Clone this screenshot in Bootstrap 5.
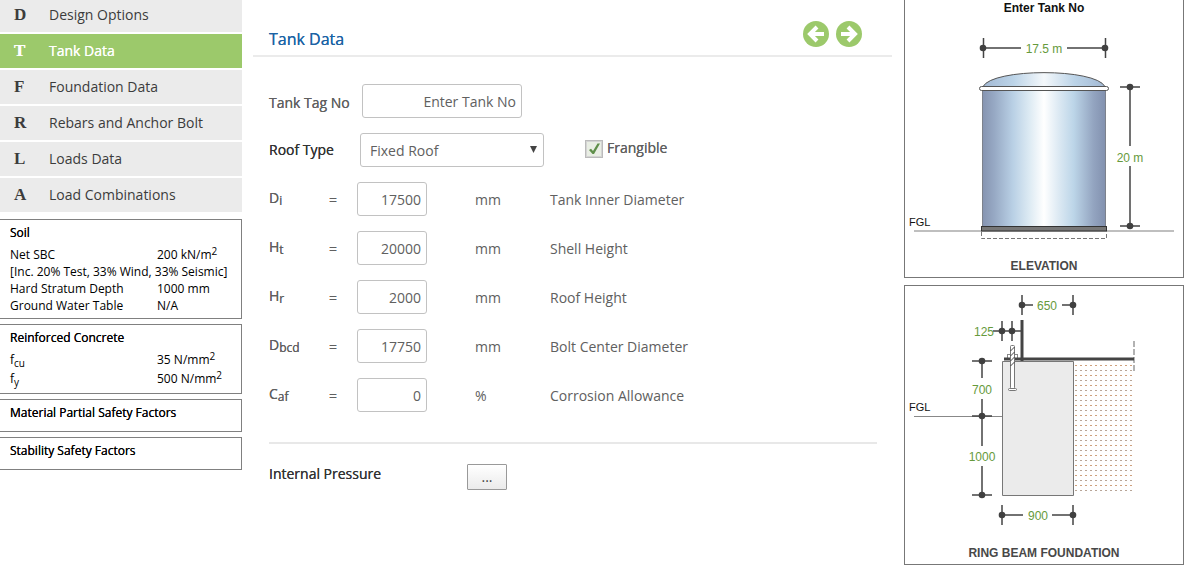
<!DOCTYPE html>
<html lang="en">
<head>
<meta charset="utf-8">
<meta name="viewport" content="width=device-width, initial-scale=1">
<title>Tank Data</title>
<link href="https://cdn.jsdelivr.net/npm/bootstrap@5.3.0/dist/css/bootstrap.min.css" rel="stylesheet">
<script src="https://cdn.jsdelivr.net/npm/bootstrap@5.3.0/dist/js/bootstrap.bundle.min.js"></script>
<style>
  body { font: 14px/20px "Open Sans", sans-serif; color: #606060; background: #fff; }
  .strong-ish { text-shadow: 0 0 0 currentColor; }
  .side { width: 242px; }
  .views { width: 280px; gap: 7px; margin-right: 2px; }
  .work { padding: 24px 12px 0 11px; min-width: 0; }

  /* step menu */
  .steps { gap: 2px; margin-top: -2px; padding-bottom: 7px; }
  .steps a { display: flex; align-items: center; height: 34px; padding: 0 14px; background: #ebebeb; color: #3c3c3c; text-decoration: none; }
  .steps a.active { background: #9cc96b; color: #fff; }
  .steps b { width: 35px; font: bold 17px/20px "Liberation Serif", serif; }

  /* summary boxes */
  .facts { gap: 5px; font-size: 12px; line-height: 17px; color: #000; }
  .facts section { border: 1px solid #808080; border-left: 0; padding: 4px 10px; }
  .facts h2 { font-size: 12px; line-height: 17px; margin: 0 0 5px; }
  .facts .bare h2 { margin-bottom: 6px; }
  .facts table { width: 100%; table-layout: fixed; }
  .facts td, .facts th { padding: 0; font-weight: 400; white-space: nowrap; }
  .facts th { width: 147px; }
  .facts .tall td, .facts .tall th { height: 19px; padding-bottom: 2px; }
  .facts sub, .facts sup { font-size: 10px; line-height: 0; }
  .facts sup { top: -4px; }

  /* form */
  .work h1 { font-size: 16px; line-height: 22px; color: #1c63a5; margin: 0; padding-bottom: 2px; }
  .head { padding: 0 30px 0 16px; height: 31px; border-bottom: 2px solid #ebebeb; box-sizing: content-box; }
  .pager { gap: 7px; margin-top: -3px; }
  .round { width: 26px; height: 26px; padding: 0; border: 0; background: none; display: block; }
  .round svg { display: block; }
  .fields { margin: 0 15px 0 16px; padding-top: 27px; gap: 15px; }
  .line { display: flex; align-items: center; height: 34px; }
  .line label sub { font-size: 12px; line-height: 0; bottom: -2px; }
  .line .form-control, .line .form-select { height: 34px; font-size: 14px; line-height: 20px; padding: 5px; border: 1px solid #c2c2c2; border-radius: 3px; color: #606060; text-align: right; }
  .line .form-select { width: 184px; margin-left: -2px; padding: 6px 20px 4px 9px; text-align: left;
    background: #fff url("data:image/svg+xml,%3Csvg xmlns='http://www.w3.org/2000/svg' width='7' height='7'%3E%3Cpath d='M0 0h7L3.5 7z' fill='%23444'/%3E%3C/svg%3E") no-repeat right 6px top 12px / 7px 7px; }
  .line .tag { width: 160px; }
  .line .num { width: 70px; }
  .wide { width: 93px; white-space: nowrap; }
  .sym { width: 60px; padding-bottom: 2px; }
  .eq { width: 28px; padding-top: 2px; }
  .unit { width: 75px; margin-left: 48px; }
  .unit, .desc { padding-top: 2px; }
  .tick { appearance: none; width: 18px; height: 18px; margin: 0 4px 2px 41px; border: 1px solid #bbb; box-shadow: inset 0 0 0 1px #d4d4d4;
    background: #e9eee4 url("data:image/svg+xml,%3Csvg xmlns='http://www.w3.org/2000/svg' viewBox='0 0 16 16'%3E%3Cpath d='M3 9l2-1.300 2 2.300L11.500 2.500H14L8 13H6.500z' fill='%235f8f4a'/%3E%3C/svg%3E") no-repeat center; }
  .rule { margin: 15px 0 0; border: 0; border-top: 2px solid #e8e8e8; opacity: 1; }
  .more { width: 40px; height: 26px; margin-top: 2px; padding: 0; border: 1px solid #999; border-radius: 1px; background: linear-gradient(#fff, #ebebeb); color: #444; line-height: 24px; font-size: 14px; }
  .opt { width: 198px; }
  .dark { color: #333; }

  /* drawings */
  .view { border: 1px solid #777; }
  .view svg { display: block; width: 100%; height: auto; }
  .view text { font-family: "Liberation Sans", sans-serif; font-size: 12px; text-anchor: middle; }
  .view .val { fill: #669a3c; }
  .view .cap { font-weight: 700; fill: #484848; }
  .view .ttl { font-weight: 700; fill: #111; }
  .view .lvl { font-size: 11px; fill: #111; text-anchor: start; }
  .dim { stroke: #444; stroke-width: 1.500; fill: none; }
  .node { fill: #404040; }
</style>
</head>
<body>
<div class="d-flex align-items-start">

  <aside class="side flex-shrink-0">
    <nav class="steps d-flex flex-column">
      <a href="#"><b>D</b>Design Options</a>
      <a href="#" class="active strong-ish" aria-current="page"><b>T</b>Tank Data</a>
      <a href="#"><b>F</b>Foundation Data</a>
      <a href="#"><b>R</b>Rebars and Anchor Bolt</a>
      <a href="#"><b>L</b>Loads Data</a>
      <a href="#"><b>A</b>Load Combinations</a>
    </nav>
    <div class="facts d-flex flex-column">
      <section>
        <h2 class="strong-ish">Soil</h2>
        <table>
          <tr><th scope="row">Net SBC</th><td>200 kN/m<sup>2</sup></td></tr>
          <tr><td colspan="2">[Inc. 20% Test, 33% Wind, 33% Seismic]</td></tr>
          <tr><th scope="row">Hard Stratum Depth</th><td>1000 mm</td></tr>
          <tr><th scope="row">Ground Water Table</th><td>N/A</td></tr>
        </table>
      </section>
      <section>
        <h2 class="strong-ish">Reinforced Concrete</h2>
        <table class="tall">
          <tr><th scope="row">f<sub>cu</sub></th><td>35 N/mm<sup>2</sup></td></tr>
          <tr><th scope="row">f<sub>y</sub></th><td>500 N/mm<sup>2</sup></td></tr>
        </table>
      </section>
      <section class="bare"><h2 class="strong-ish">Material Partial Safety Factors</h2></section>
      <section class="bare"><h2 class="strong-ish">Stability Safety Factors</h2></section>
    </div>
  </aside>

  <main class="work flex-grow-1">
    <header class="head d-flex align-items-center">
      <h1 class="strong-ish me-auto">Tank Data</h1>
      <div class="pager d-flex align-self-start">
        <button type="button" class="round" aria-label="Previous"><svg width="26" height="26" viewBox="0 0 26 26"><circle cx="13" cy="13" r="13" fill="#9cc96b"/><path d="M21 13H8M14 6l-7 7 7 7" fill="none" stroke="#fff" stroke-width="4"/></svg></button>
        <button type="button" class="round" aria-label="Next"><svg width="26" height="26" viewBox="0 0 26 26"><circle cx="13" cy="13" r="13" fill="#9cc96b"/><path d="M5 13h13M12 6l7 7-7 7" fill="none" stroke="#fff" stroke-width="4"/></svg></button>
      </div>
    </header>

    <form class="fields d-flex flex-column">
      <div class="line">
        <label class="wide strong-ish pt-1" for="tag">Tank Tag No</label>
        <input id="tag" class="form-control tag" value="Enter Tank No">
      </div>
      <div class="line">
        <label class="wide strong-ish dark" for="roof">Roof Type</label>
        <select id="roof" class="form-select"><option>Fixed Roof</option><option>Floating Roof</option></select>
        <input id="frangible" type="checkbox" class="tick" checked>
        <label class="strong-ish pb-1" for="frangible">Frangible</label>
      </div>
      <div class="line"><label class="sym strong-ish" for="di">D<sub>i</sub></label><span class="eq strong-ish">=</span><input id="di" class="form-control num" value="17500"><span class="unit">mm</span><span class="desc">Tank Inner Diameter</span></div>
      <div class="line"><label class="sym strong-ish" for="ht">H<sub>t</sub></label><span class="eq strong-ish">=</span><input id="ht" class="form-control num" value="20000"><span class="unit">mm</span><span class="desc">Shell Height</span></div>
      <div class="line"><label class="sym strong-ish" for="hr">H<sub>r</sub></label><span class="eq strong-ish">=</span><input id="hr" class="form-control num" value="2000"><span class="unit">mm</span><span class="desc">Roof Height</span></div>
      <div class="line"><label class="sym strong-ish" for="dbcd">D<sub>bcd</sub></label><span class="eq strong-ish">=</span><input id="dbcd" class="form-control num" value="17750"><span class="unit">mm</span><span class="desc">Bolt Center Diameter</span></div>
      <div class="line"><label class="sym strong-ish" for="caf">C<sub>af</sub></label><span class="eq strong-ish">=</span><input id="caf" class="form-control num" value="0"><span class="unit">%</span><span class="desc">Corrosion Allowance</span></div>
      <hr class="rule">
      <div class="line">
        <label class="opt strong-ish dark pb-1" for="pressure">Internal Pressure</label>
        <button id="pressure" type="button" class="more">...</button>
      </div>
    </form>
  </main>

  <aside class="views flex-shrink-0 d-flex flex-column">
    <div class="view border-top-0">
      <svg viewBox="905 0 278 277">
        <defs>
          <linearGradient id="steel">
            <stop offset="0" stop-color="#8593b0"/><stop offset=".1" stop-color="#97a9c4"/><stop offset=".25" stop-color="#b9d0e5"/>
            <stop offset=".38" stop-color="#dceaf3"/><stop offset=".5" stop-color="#fff"/><stop offset=".62" stop-color="#dce9f3"/>
            <stop offset=".74" stop-color="#bcd5e8"/><stop offset=".9" stop-color="#93a4c0"/><stop offset="1" stop-color="#8190ae"/>
          </linearGradient>
          <linearGradient id="dome">
            <stop offset="0" stop-color="#a3b9d4"/><stop offset=".25" stop-color="#bcd4e8"/><stop offset=".5" stop-color="#f4f8fb"/>
            <stop offset=".75" stop-color="#bcd4e8"/><stop offset="1" stop-color="#a3b9d4"/>
          </linearGradient>
        </defs>
        <text x="1044" y="12" class="ttl">Enter Tank No</text>
        <path class="dim" d="M983.500 38v20M1105.500 38v20M983 48h38M1067 48h38"/>
        <circle class="node" cx="983" cy="48" r="3.300"/><circle class="node" cx="1105" cy="48" r="3.300"/>
        <text x="1044" y="53" class="val">17.5 m</text>
        <path d="M983 86.500C993 68 1095 68 1105 86.500z" fill="url(#dome)" stroke="#555"/>
        <path d="M982 90h124v136h-124z" fill="url(#steel)"/>
        <path d="M982.500 90v136M1105.500 90v136" stroke="#7d828c"/>
        <rect x="979.500" y="86.500" width="129" height="4" rx="2" fill="#fff" stroke="#555"/>
        <path d="M914 231h260" stroke="#aaa" stroke-width="1.500"/>
        <rect x="981.500" y="226.500" width="125" height="4.500" fill="#777" stroke="#333"/>
        <path d="M981.500 232v6.500h125v-6.500" fill="none" stroke="#777" stroke-dasharray="4 2"/>
        <path class="dim" d="M1120 87h20M1120 226h20M1130 87v59M1130 166v60"/>
        <circle class="node" cx="1130" cy="87" r="3.300"/><circle class="node" cx="1130" cy="226" r="3.300"/>
        <text x="1130" y="162" class="val">20 m</text>
        <text x="909" y="226" class="lvl">FGL</text>
        <text x="1044" y="270" class="cap">ELEVATION</text>
      </svg>
    </div>
    <div class="view">
      <svg viewBox="905 286 278 278">
        <defs>
          <pattern id="soil" patternUnits="userSpaceOnUse" x="1074" y="363" width="5" height="10">
            <path d="M1 2.500h2" stroke="#cfa07c"/><path d="M1 7.500h2" stroke="#b8a597"/>
          </pattern>
        </defs>
        <path d="M1074 363h59v130h-59z" fill="url(#soil)"/>
        <path d="M1002.500 361.500h71v134h-71z" fill="#ebebeb" stroke="#777"/>
        <path class="dim" d="M1022 295v20M1073 295v20M1022 305h11M1062 305h11"/>
        <circle class="node" cx="1022" cy="305" r="3.300"/><circle class="node" cx="1073" cy="305" r="3.300"/>
        <text x="1047" y="310" class="val">650</text>
        <path class="dim" d="M1002 321v20M1012 321v20M993 331h28"/>
        <circle class="node" cx="1002" cy="331" r="3.300"/><circle class="node" cx="1012" cy="331" r="3.300"/>
        <text x="984" y="336" class="val">125</text>
        <path d="M1134 341v31" stroke="#999" stroke-width="1.500" stroke-dasharray="6 2"/>
        <rect x="1007.500" y="354.500" width="10" height="4" fill="#fff" stroke="#888"/>
        <path d="M1004 359h130" stroke="#444" stroke-width="3"/>
        <path d="M1022 320v41" stroke="#444" stroke-width="3"/>
        <rect x="1010.500" y="345.500" width="4" height="43" rx="1" fill="#fff" stroke="#777"/>
        <path d="M1010.500 351l4-4M1010.500 356l4-4M1010.500 361l4-4M1010.500 366l4-4" stroke="#444"/>
        <rect x="1008.500" y="388.500" width="8" height="2" rx="1" fill="#fff" stroke="#777"/>
        <path d="M914 416.500h88" stroke="#888"/>
        <path class="dim" d="M972 361h20M972 416h20M972 495h20M982 361v17M982 399v47M982 466v29"/>
        <circle class="node" cx="982" cy="361" r="3.300"/><circle class="node" cx="982" cy="416" r="3.300"/><circle class="node" cx="982" cy="495" r="3.300"/>
        <text x="982" y="394" class="val">700</text>
        <text x="982" y="461" class="val">1000</text>
        <path class="dim" d="M1002 505v20M1073 505v20M1002 515h21M1052 515h21"/>
        <circle class="node" cx="1002" cy="515" r="3.300"/><circle class="node" cx="1073" cy="515" r="3.300"/>
        <text x="1038" y="520" class="val">900</text>
        <text x="909" y="411" class="lvl">FGL</text>
        <text x="1044" y="557" class="cap">RING BEAM FOUNDATION</text>
      </svg>
    </div>
  </aside>
</div>
</body>
</html>
